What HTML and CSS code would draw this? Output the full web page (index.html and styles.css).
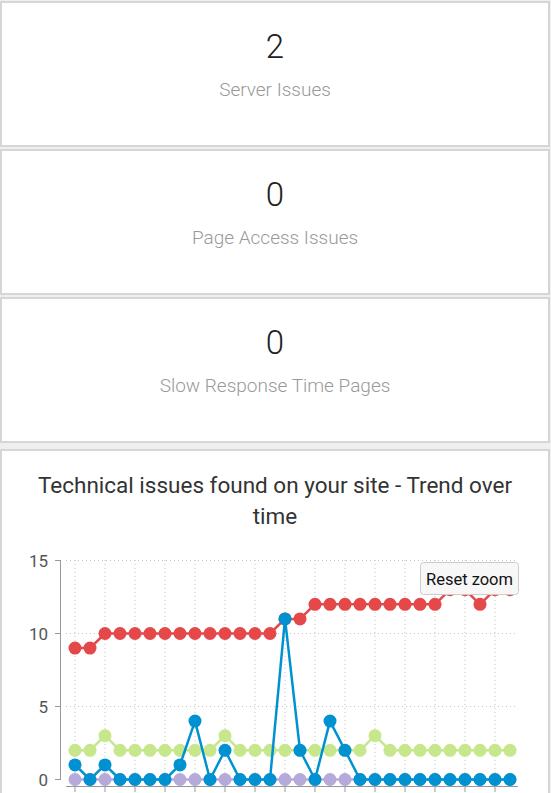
FILE: index.html
```html
<!DOCTYPE html>
<html lang="en">
<head>
	<meta charset="UTF-8">
	<title>Site issues</title>
	<link rel="stylesheet" href="styles.css">
</head>
<body>
<div class="page">
	<div class="stat">
		<div class="stat-num">2</div>
		<div class="stat-label">Server Issues</div>
	</div>
	<div class="stat">
		<div class="stat-num">0</div>
		<div class="stat-label">Page Access Issues</div>
	</div>
	<div class="stat">
		<div class="stat-num">0</div>
		<div class="stat-label">Slow Response Time Pages</div>
	</div>
	<div class="chart-card">
		<h2 class="chart-title">Technical issues found on your site - Trend over time</h2>
		<svg class="chart" id="trend" width="546" height="260" viewBox="2 533 546 260"></svg>
	</div>
</div>

<script>
	(function chart(){
		var NS = 'http://www.w3.org/2000/svg';
		var oSvg = document.getElementById('trend');

		function x(i){ return 75 + 15 * i; }
		function y(v){ return 780.5 - 14.6 * v; }
		function add(name, attrs, parent){
			var node = document.createElementNS(NS, name);
			for(var k in attrs){
				node.setAttribute(k, attrs[k]);
			}
			(parent || oSvg).appendChild(node);
			return node;
		}

		// grid
		for(var k = 0; k < 15; k++){
			add('line', {x1: x(2 * k), y1: 561, x2: x(2 * k), y2: 787, 'class': 'grid'});
		}
		[5, 10, 15].forEach(function(v){
			add('line', {x1: 66, y1: y(v), x2: 518, y2: y(v), 'class': 'grid'});
		});

		// axes
		add('line', {x1: 60.5, y1: y(15), x2: 60.5, y2: y(0), 'class': 'axis'});
		[0, 5, 10, 15].forEach(function(v){
			add('line', {x1: 55, y1: y(v), x2: 61, y2: y(v), 'class': 'axis'});
			var t = add('text', {x: 48, y: y(v) + 6, 'class': 'ylabel'});
			t.textContent = v;
		});
		add('line', {x1: 66, y1: 787.5, x2: 518, y2: 787.5, 'class': 'axis'});
		for(var k = 0; k < 15; k++){
			add('line', {x1: x(2 * k), y1: 788, x2: x(2 * k), y2: 794, 'class': 'axis'});
		}

		// series
		var series = [
			{cls: 'red', data: [9,9,10,10,10,10,10,10,10,10,10,10,10,10,11,11,12,12,12,12,12,12,12,12,12,13,13,12,13,13]},
			{cls: 'green', data: [2,2,3,2,2,2,2,2,2,2,3,2,2,2,2,2,2,2,2,2,3,2,2,2,2,2,2,2,2,2]},
			{cls: 'purple', data: [0,0,0,0,0,0,0,0,0,0,0,0,0,0,0,0,0,0,0,0,0,0,0,0,0,0,0,0,0,0]},
			{cls: 'blue', data: [1,0,1,0,0,0,0,1,4,0,2,0,0,0,11,2,0,4,2,0,0,0,0,0,0,0,0,0,0,0]}
		];
		series.forEach(function(s){
			var g = add('g', {'class': 'series ' + s.cls});
			var d = '';
			for(var i = 0; i < s.data.length; i++){
				d += (i ? ' L' : 'M') + x(i) + ' ' + y(s.data[i]);
			}
			add('path', {d: d}, g);
			for(var i = 0; i < s.data.length; i++){
				add('circle', {cx: x(i), cy: y(s.data[i]), r: 6.5}, g);
			}
		});

		// reset zoom button
		var btn = add('g', {'class': 'reset'});
		add('rect', {x: 420.5, y: 563.5, width: 98, height: 32, rx: 3}, btn);
		var label = add('text', {x: 469.5, y: 585.5}, btn);
		label.textContent = 'Reset zoom';
	})();
</script>
</body>
</html>
```

FILE: styles.css
```css
body,h2{
	margin: 0;
}
body{
	background-color: #efefef;
	font-family: Roboto, "Liberation Sans", Arial, sans-serif;
}
.page{
	width: 550px;
	padding-top: 1px;
}
.stat{
	box-sizing: border-box;
	height: 146px;
	margin-bottom: 2px;
	padding-top: 24px;
	border: 2px solid #d6d6d6;
	background-color: #fff;
	text-align: center;
}
.stat-num{
	font-size: 33px;
	font-weight: 300;
	line-height: 40px;
	color: #222;
}
.stat-label{
	margin-top: 12px;
	font-size: 19px;
	font-weight: 300;
	line-height: 22px;
	color: #999;
}
.chart-card{
	box-sizing: border-box;
	height: 400px;
	margin-top: 6px;
	border: 2px solid #d6d6d6;
	background-color: #fff;
}
.chart-title{
	width: 500px;
	margin: 0 auto;
	padding-top: 19px;
	font-size: 22.5px;
	font-weight: 400;
	line-height: 31px;
	color: #333;
	text-align: center;
}
.chart{
	display: block;
}
.grid{
	stroke: #c4c4c4;
	stroke-width: 1;
	stroke-dasharray: 1 3;
}
.axis{
	stroke: #999;
	stroke-width: 1;
}
.ylabel{
	font-family: Roboto, "Liberation Sans", sans-serif;
	font-size: 17px;
	fill: #555;
	text-anchor: end;
}
.series path{
	fill: none;
	stroke-width: 2.5;
	stroke-linejoin: round;
}
.red path{ stroke: #e44848; }
.red circle{ fill: #e44848; }
.green path{ stroke: #c6e78c; }
.green circle{ fill: #c6e78c; }
.purple path{ stroke: #b6aada; }
.purple circle{ fill: #b6aada; }
.blue path{ stroke: #0092d0; }
.blue circle{ fill: #0092d0; }
.reset rect{
	fill: #f7f7f7;
	stroke: #cccccc;
	stroke-width: 1;
}
.reset text{
	font-family: Roboto, "Liberation Sans", sans-serif;
	font-size: 16.5px;
	fill: #111;
	text-anchor: middle;
}
```
